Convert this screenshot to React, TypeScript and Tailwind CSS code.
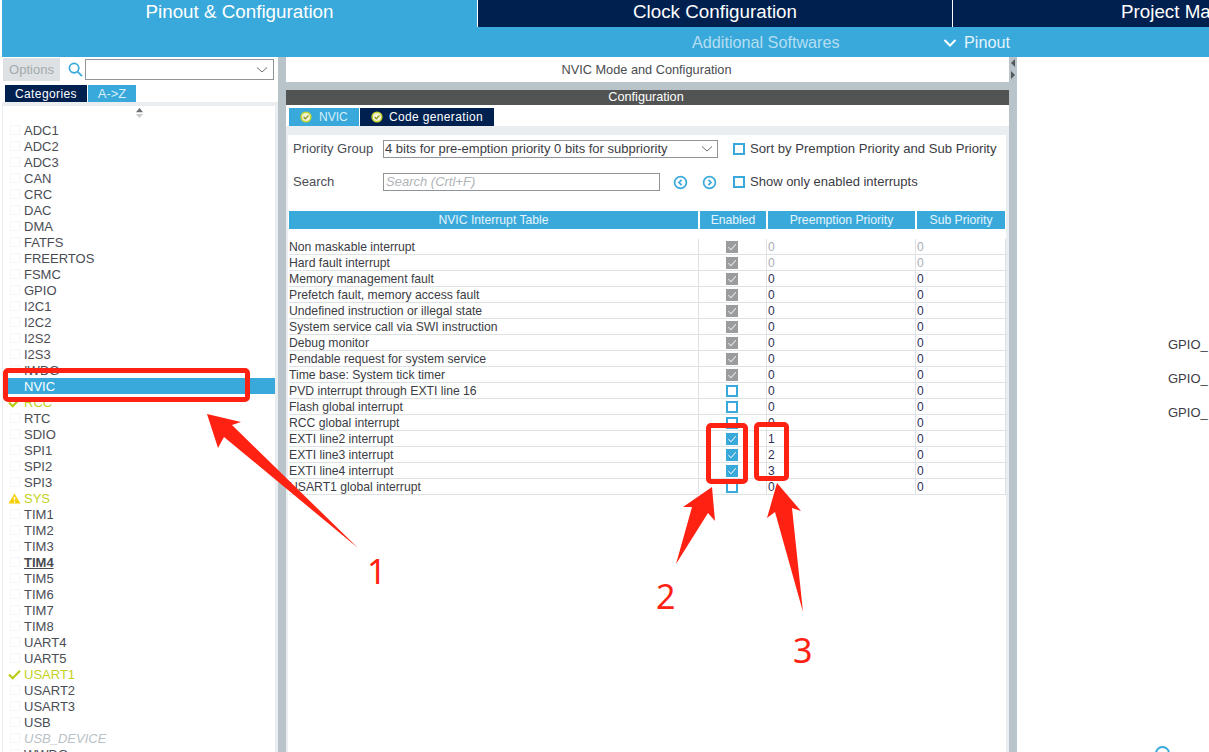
import React from 'react';

const moduleList = [
  'ADC1', 'ADC2', 'ADC3', 'CAN', 'CRC', 'DAC', 'DMA', 'FATFS', 'FREERTOS', 'FSMC', 'GPIO', 'I2C1', 'I2C2', 'I2S2', 'I2S3', 'IWDG',
  'NVIC', 'RCC', 'RTC', 'SDIO', 'SPI1', 'SPI2', 'SPI3', 'SYS', 'TIM1', 'TIM2', 'TIM3', 'TIM4', 'TIM5', 'TIM6', 'TIM7', 'TIM8',
  'UART4', 'UART5', 'USART1', 'USART2', 'USART3', 'USB', 'USB_DEVICE', 'WWDG',
];

type Row = { name: string; state: 'locked' | 'off' | 'on'; pre: string; sub: string; dim?: boolean };

const rows: Row[] = [
  { name: 'Non maskable interrupt', state: 'locked', pre: '0', sub: '0', dim: true },
  { name: 'Hard fault interrupt', state: 'locked', pre: '0', sub: '0', dim: true },
  { name: 'Memory management fault', state: 'locked', pre: '0', sub: '0' },
  { name: 'Prefetch fault, memory access fault', state: 'locked', pre: '0', sub: '0' },
  { name: 'Undefined instruction or illegal state', state: 'locked', pre: '0', sub: '0' },
  { name: 'System service call via SWI instruction', state: 'locked', pre: '0', sub: '0' },
  { name: 'Debug monitor', state: 'locked', pre: '0', sub: '0' },
  { name: 'Pendable request for system service', state: 'locked', pre: '0', sub: '0' },
  { name: 'Time base: System tick timer', state: 'locked', pre: '0', sub: '0' },
  { name: 'PVD interrupt through EXTI line 16', state: 'off', pre: '0', sub: '0' },
  { name: 'Flash global interrupt', state: 'off', pre: '0', sub: '0' },
  { name: 'RCC global interrupt', state: 'off', pre: '0', sub: '0' },
  { name: 'EXTI line2 interrupt', state: 'on', pre: '1', sub: '0' },
  { name: 'EXTI line3 interrupt', state: 'on', pre: '2', sub: '0' },
  { name: 'EXTI line4 interrupt', state: 'on', pre: '3', sub: '0' },
  { name: 'USART1 global interrupt', state: 'off', pre: '0', sub: '0' },
];

const CheckMark = () => (
  <svg viewBox="0 0 12 12" className="w-3 h-3" fill="none" stroke="#fff" strokeWidth="1">
    <path d="M2.5 6.2 L5 8.8 L9.8 3.2" />
  </svg>
);

const CheckBox = ({ state }: { state: Row['state'] }) => {
  if (state === 'locked') return <div className="w-3 h-3 bg-[#9a9c9e]"><CheckMark /></div>;
  if (state === 'on') return <div className="w-3 h-3 bg-[#39a9db]"><CheckMark /></div>;
  return <div className="w-3 h-3 border-2 border-[#39a9db] bg-white" />;
};

const Chevron = () => (
  <svg viewBox="0 0 12 8" className="w-3 h-2" fill="none" stroke="#6b6f72" strokeWidth="1">
    <path d="M1 1.5 L6 6 L11 1.5" />
  </svg>
);

const OkBadge = () => (
  <svg viewBox="0 0 12 12" className="w-3 h-3">
    <circle cx="6" cy="6" r="5.6" fill="#c4d62e" />
    <circle cx="6" cy="6" r="4" fill="#f4f1d8" />
    <path d="M3.6 6 L5.4 7.8 L8.5 4.4" fill="none" stroke="#8a9a1c" strokeWidth="1.3" />
  </svg>
);

const CircleArrow = ({ right }: { right?: boolean }) => (
  <svg viewBox="0 0 16 16" className="w-[15px] h-[15px]" fill="none" stroke="#39a9db">
    <circle cx="8" cy="8" r="6.3" strokeWidth="1.8" />
    <path d={right ? 'M6.8 5.2 L9.6 8 L6.8 10.8' : 'M9.2 5.2 L6.4 8 L9.2 10.8'} strokeWidth="1.8" />
  </svg>
);

const ModuleIcon = ({ name }: { name: string }) => {
  if (name === 'SYS') {
    return (
      <svg viewBox="0 0 14 12" className="w-[13px] h-[11px]">
        <path d="M7 0.5 L13.5 11.5 L0.5 11.5 Z" fill="#f7cf00" />
        <path d="M7 4 L7 8 M7 9 L7 10.5" stroke="#fff" strokeWidth="1.5" />
      </svg>
    );
  }
  if (name === 'RCC' || name === 'USART1') {
    return (
      <svg viewBox="0 0 14 12" className="w-[13px] h-[11px]" fill="none" stroke="#b9cc12" strokeWidth="2.4">
        <path d="M1 6 L5 10 L13 2" />
      </svg>
    );
  }
  if (name === 'NVIC') return <div className="w-[10px] h-[10px] mx-[1.5px]" />;
  return <div className="w-[10px] h-[10px] mx-[1.5px] border border-[#f5f6f6]" />;
};

const moduleText = (name: string) => {
  if (name === 'NVIC') return 'text-white';
  if (name === 'RCC' || name === 'SYS' || name === 'USART1') return 'text-[#c2d21c]';
  if (name === 'TIM4') return 'font-bold underline text-[#4a4c50]';
  if (name === 'USB_DEVICE') return 'italic text-[#b9c2c8]';
  return 'text-[#4a4c54]';
};

const App: React.FC = () => {
  return (
    <div className="relative w-[1209px] h-[752px] overflow-hidden bg-white text-[12px] text-[#3c3c44] font-['Liberation_Sans',Arial,sans-serif]">
      {/* top tabs */}
      <div className="flex h-[27px] pl-[2px] gap-px text-white text-[18.8px]">
        <div className="w-[475px] bg-[#39a9db] flex justify-center items-center pb-[2px]">Pinout &amp; Configuration</div>
        <div className="w-[474px] bg-[#002050] flex justify-center items-center pb-[2px]">Clock Configuration</div>
        <div className="flex-1 bg-[#002050] pl-[168px] whitespace-nowrap overflow-hidden flex items-center pb-[2px]">Project Manager</div>
      </div>
      <div className="ml-[2px] h-[30px] bg-[#39a9db] flex items-center text-[16.2px] pl-[690px] pt-[1px]">
        <span className="text-[#b5def2] w-[148px] whitespace-nowrap">Additional Softwares</span>
        <svg viewBox="0 0 14 10" className="w-[14px] h-[10px] ml-[103px] mr-[7px]" fill="none" stroke="#fff" strokeWidth="2">
          <path d="M1.5 2 L7 7.5 L12.5 2" />
        </svg>
        <span className="text-[#e2f3fb]">Pinout</span>
      </div>

      <div className="flex h-[695px]">
        {/* left panel */}
        <div className="w-[278px] pl-[2px] flex flex-col shrink-0">
          <div className="flex items-center h-[28px] pb-[3px] pl-px">
            <div className="w-[57px] h-[23px] bg-[#dde1e3] text-[#a4a9ad] text-[13px] flex items-center justify-center">Options</div>
            <svg viewBox="0 0 16 16" className="w-[15px] h-[15px] ml-2" fill="none" stroke="#39a9db" strokeWidth="1.8">
              <circle cx="6.5" cy="6.5" r="5" />
              <path d="M10.2 10.2 L15 15" />
            </svg>
            <div className="w-[189px] h-[21px] ml-[2px] border border-[#8f9498] flex items-center justify-end pr-[5px]">
              <Chevron />
            </div>
          </div>
          <div className="flex h-[17px] pl-[3px] gap-px text-white">
            <div className="w-[82px] bg-[#002050] flex items-center justify-center tracking-[0.4px]">Categories</div>
            <div className="w-[48px] bg-[#39a9db] flex items-center justify-center text-[#d8eff9] text-[13px]">A-&gt;Z</div>
          </div>
          <div className="flex-1 bg-[#ebeef0] pt-1 pl-px pr-[3px] overflow-hidden">
            <div className="h-full bg-white pt-[2px]">
              <div className="h-[14px] flex justify-center">
                <svg viewBox="0 0 10 12" className="w-[9px] h-[11px]">
                  <path d="M5 0 L9 4.5 L1 4.5 Z" fill="#6f7376" />
                  <path d="M5 11 L9 6.5 L1 6.5 Z" fill="#c6c9cb" />
                </svg>
              </div>
              {moduleList.map((name) => (
                <div key={name} className={`h-4 flex items-center pl-[2px] ${name === 'NVIC' ? 'bg-[#39a9db]' : ''}`}>
                  <div className="w-[17px] flex items-center justify-center shrink-0 pl-[2px]"><ModuleIcon name={name} /></div>
                  <span className={`ml-[2px] text-[13px] pt-[1px] ${moduleText(name)}`}>{name}</span>
                </div>
              ))}
            </div>
          </div>
        </div>

        <div className="w-2 shrink-0 bg-[#b8c4ca]" />

        {/* center panel */}
        <div className="w-[723px] shrink-0 flex flex-col">
          <div className="h-[25px] flex items-center justify-center text-[#4a4c50] text-[12.75px] pr-[2px]">NVIC Mode and Configuration</div>
          <div className="h-2 bg-[#b8c4ca]" />
          <div className="h-[15px] bg-[#525453] text-white flex items-center justify-center text-[12.7px] pr-[3px] pt-[1px]">Configuration</div>
          <div className="flex h-[21px] pt-[3px] pl-[3px] gap-px text-white">
            <div className="w-[70px] bg-[#39a9db] flex items-center pl-[11px] gap-[7px] text-[#d8eff9]"><OkBadge />NVIC</div>
            <div className="w-[134px] bg-[#002050] flex items-center pl-[11px] gap-[6px] tracking-[0.35px]"><OkBadge />Code generation</div>
          </div>
          <div className="flex-1 bg-[#ebeef0] pt-1 pl-[2px] pr-[3px]">
            <div className="h-full bg-white pl-px">
              <div className="flex items-center h-[28px] mt-[5px] pl-[4px] text-[13px]">
                <span className="w-[90px] text-[#4a4c54]">Priority Group</span>
                <div className="w-[335px] h-[18px] border border-[#8f9498] flex items-center justify-between pl-px pr-[4px]">
                  <span>4 bits for pre-emption priority 0 bits for subpriority</span>
                  <Chevron />
                </div>
                <div className="ml-[15px]"><CheckBox state="off" /></div>
                <span className="ml-[5px] text-[13.13px] whitespace-nowrap">Sort by Premption Priority and Sub Priority</span>
              </div>
              <div className="flex items-center h-[20px] mt-[9px] pl-[4px] text-[13px]">
                <span className="w-[90px] text-[#4a4c54]">Search</span>
                <div className="w-[277px] h-[18px] border border-[#8f9498] flex items-center pl-[2px] italic text-[#b0b4b8]">Search (Crtl+F)</div>
                <div className="ml-[13px]"><CircleArrow /></div>
                <div className="ml-[14px]"><CircleArrow right /></div>
                <div className="ml-[16px]"><CheckBox state="off" /></div>
                <span className="ml-[5px]">Show only enabled interrupts</span>
              </div>

              {/* table */}
              <div className="mt-[19px] flex h-[18px] text-[#e4f4fb] text-[12.2px] gap-[2px]">
                <div className="w-[409px] bg-[#39a9db] flex items-center justify-center">NVIC Interrupt Table</div>
                <div className="w-[66px] bg-[#39a9db] flex items-center justify-center">Enabled</div>
                <div className="w-[147px] bg-[#39a9db] flex items-center justify-center">Preemption Priority</div>
                <div className="w-[88px] bg-[#39a9db] flex items-center justify-center">Sub Priority</div>
              </div>
              <div className="mt-[10px]">
                {rows.map((row) => (
                  <div key={row.name} className="flex h-4 border-b border-[#dfe2e4] w-[719px]">
                    <div className="w-[410px] flex items-center border-r border-[#dfe2e4] whitespace-nowrap text-[12.2px] pt-[2px]">{row.name}</div>
                    <div className="w-[68px] flex items-center justify-center border-r border-[#dfe2e4] pr-[2px]"><CheckBox state={row.state} /></div>
                    <div className={`w-[149px] flex items-center pl-px border-r border-[#dfe2e4] ${row.dim ? 'text-[#a9adb8]' : 'text-[#303058]'}`}>{row.pre}</div>
                    <div className={`w-[90px] flex items-center pl-px border-r border-[#dfe2e4] ${row.dim ? 'text-[#a9adb8]' : 'text-[#303058]'}`}>{row.sub}</div>
                  </div>
                ))}
              </div>
            </div>
          </div>
        </div>

        <div className="relative w-2 shrink-0 bg-[#b8c4ca]">
          <svg viewBox="0 0 8 24" className="absolute left-0 top-0 w-2 h-6">
            <path d="M6 2 L2 6 L6 10 Z" fill="#55585a" />
            <path d="M2 14 L6 18 L2 22 Z" fill="#55585a" />
          </svg>
        </div>

        {/* right canvas */}
        <div className="flex-1 relative">
          <div className="absolute left-[151px] top-[278px] text-[13px]">GPIO_</div>
          <div className="absolute left-[151px] top-[312px] text-[13px]">GPIO_</div>
          <div className="absolute left-[151px] top-[346px] text-[13px]">GPIO_</div>
          <div className="absolute left-[138px] top-[689px] w-[15px] h-[15px] rounded-full border-2 border-[#39a9db]" />
        </div>
      </div>

      {/* red annotations */}
      <div className="absolute left-[3px] top-[368px] w-[247px] h-[34px] border-[5px] border-[#ff2212] rounded-[5px]" />
      <div className="absolute left-[706px] top-[423px] w-[42px] h-[61px] border-[5px] border-[#ff2212] rounded-[5px]" />
      <div className="absolute left-[754px] top-[422px] w-[35px] h-[59px] border-[5px] border-[#ff2212] rounded-[5px]" />
      <svg viewBox="0 0 1209 752" className="absolute inset-0 w-[1209px] h-[752px] pointer-events-none">
        <polygon points="207,414 241,422 232,425 358,548 224,437 218,448" fill="#ff2212" />
        <polygon points="712,487 683,507 692,507 676,564 708,513 715,521" fill="#ff2212" />
        <polygon points="777,483 801,511 792,508 803,612 775,512 767,518" fill="#ff2212" />
      </svg>
      <span className="absolute left-[367px] top-[548px] text-[34px] leading-[46px] text-[#ff2212] font-['Noto_Sans',sans-serif]">1</span>
      <span className="absolute left-[656px] top-[573px] text-[34px] leading-[46px] text-[#ff2212] font-['Noto_Sans',sans-serif]">2</span>
      <span className="absolute left-[793px] top-[627px] text-[34px] leading-[46px] text-[#ff2212] font-['Noto_Sans',sans-serif]">3</span>
    </div>
  );
};

export default App;
